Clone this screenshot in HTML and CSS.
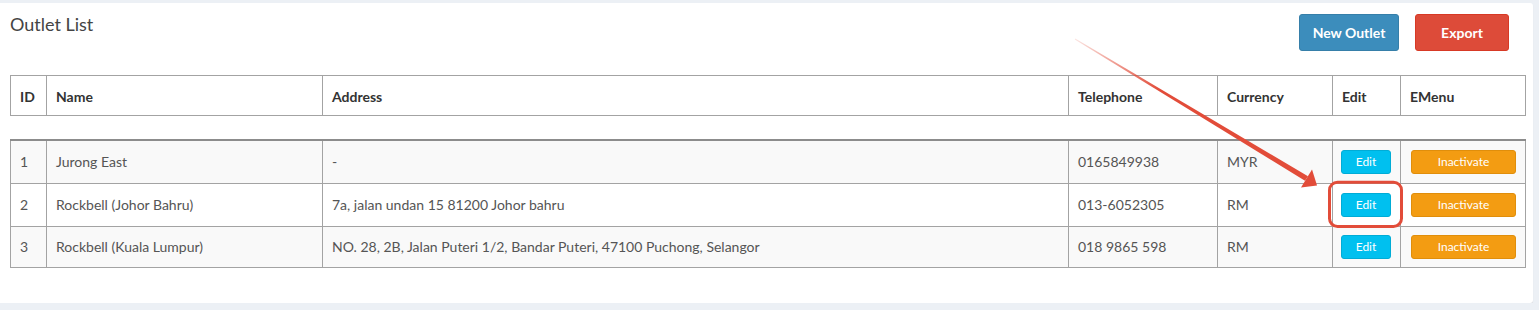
FILE: index.html
```html
<!doctype html>
<html lang="en">
  <head>
    <meta charset="UTF-8" />
    <meta name="viewport" content="width=device-width, initial-scale=1.0" />
    <title>Outlet List</title>
    <link rel="stylesheet" href="styles.css">
  </head>
  <body>
    <div class="box">
      <div class="box-header">
        <h3 class="box-title">Outlet List</h3>
        <div class="box-tools">
          <a href="#" class="btn btn-primary">New Outlet</a>
          <a href="#" class="btn btn-danger">Export</a>
        </div>
      </div>

      <table class="grid grid-head">
        <colgroup>
          <col class="c-id"><col class="c-name"><col class="c-address"><col class="c-tel">
          <col class="c-cur"><col class="c-edit"><col class="c-menu">
        </colgroup>
        <thead>
          <tr>
            <th>ID</th>
            <th>Name</th>
            <th>Address</th>
            <th>Telephone</th>
            <th>Currency</th>
            <th>Edit</th>
            <th>EMenu</th>
          </tr>
        </thead>
      </table>

      <table class="grid grid-body">
        <colgroup>
          <col class="c-id"><col class="c-name"><col class="c-address"><col class="c-tel">
          <col class="c-cur"><col class="c-edit"><col class="c-menu">
        </colgroup>
        <tbody>
          <tr>
            <td>1</td>
            <td>Jurong East</td>
            <td>-</td>
            <td>0165849938</td>
            <td>MYR</td>
            <td class="action"><a href="#" class="btn-xs btn-info">Edit</a></td>
            <td class="action"><a href="#" class="btn-xs btn-warning">Inactivate</a></td>
          </tr>
          <tr>
            <td>2</td>
            <td>Rockbell (Johor Bahru)</td>
            <td>7a, jalan undan 15 81200 Johor bahru</td>
            <td>013-6052305</td>
            <td>RM</td>
            <td class="action"><a href="#" class="btn-xs btn-info">Edit</a></td>
            <td class="action"><a href="#" class="btn-xs btn-warning">Inactivate</a></td>
          </tr>
          <tr class="last">
            <td>3</td>
            <td>Rockbell (Kuala Lumpur)</td>
            <td>NO. 28, 2B, Jalan Puteri 1/2, Bandar Puteri, 47100 Puchong, Selangor</td>
            <td>018 9865 598</td>
            <td>RM</td>
            <td class="action"><a href="#" class="btn-xs btn-info">Edit</a></td>
            <td class="action"><a href="#" class="btn-xs btn-warning">Inactivate</a></td>
          </tr>
        </tbody>
      </table>
    </div>

    <!-- annotation drawn over the screenshot -->
    <svg class="annotation" width="1539" height="310" viewBox="0 0 1539 310">
      <defs>
        <linearGradient id="fade" gradientUnits="userSpaceOnUse" x1="1075" y1="39" x2="1160" y2="90">
          <stop offset="0" stop-color="#e24c39" stop-opacity="0.15" />
          <stop offset="1" stop-color="#e24c39" stop-opacity="1" />
        </linearGradient>
      </defs>
      <polygon fill="url(#fade)" points="1074.8,39.4 1075.2,38.6 1308,176.2 1305,180.8" />
      <polygon fill="#e24c39" points="1317,185.5 1312,169.5 1301,187.5" />
      <rect x="1329.5" y="182.2" width="72" height="44.3" rx="8" ry="8"
            fill="none" stroke="#e24c39" stroke-width="3" />
    </svg>
  </body>
</html>
```

FILE: styles.css
```css
* {
  margin: 0;
  padding: 0;
  box-sizing: border-box;
}

body {
  font-family: Lato, 'Open Sans', sans-serif;
  background: #ecf0f5;
  color: #333;
  padding: 3px 6px 0 0;
  position: relative;
  overflow: hidden;
}

/* Box */
.box {
  background: #fff;
  height: 300px;
  border-radius: 0 3px 3px 0;
  box-shadow: 0 1px 1px rgba(0, 0, 0, 0.1);
  padding: 10px 8px 0 10px;
}

.box-header {
  display: flex;
  justify-content: space-between;
  align-items: flex-start;
  height: 62px;
}

.box-title {
  font-size: 18px;
  font-weight: 400;
  color: #444;
  line-height: 22px;
}

.box-tools {
  display: flex;
  gap: 16px;
  margin: 1px 16px 0 0;
}

.btn {
  display: flex;
  align-items: center;
  justify-content: center;
  height: 37px;
  border-radius: 3px;
  color: #fff;
  font-size: 14px;
  font-weight: 700;
  text-decoration: none;
}

.btn-primary {
  width: 100px;
  background: #3c8dbc;
  border: 1px solid #367fa9;
}

.btn-danger {
  width: 94px;
  background: #dd4b39;
  border: 1px solid #d73925;
}

/* Tables */
.grid {
  width: 1515px;
  table-layout: fixed;
  border-collapse: collapse;
  font-size: 14px;
}

.c-id { width: 36px; }
.c-name { width: 276px; }
.c-address { width: 746px; }
.c-tel { width: 149px; }
.c-cur { width: 115px; }
.c-edit { width: 68px; }
.c-menu { width: 125px; }

.grid th,
.grid td {
  border: 1px solid #a3a3a3;
  text-align: left;
  padding: 0 9px;
  white-space: nowrap;
}

.grid th {
  height: 40px;
  font-weight: 700;
  color: #333;
  padding-top: 2px;
}

.grid-body {
  margin-top: 23px;
  border-top: 2px solid #8c8c8c;
}

.grid-body tr:first-child td {
  border-top: 2px solid #8c8c8c;
}

.grid td {
  height: 43px;
  color: #555;
}

.grid tr.last td {
  height: 41px;
}

.grid tbody tr:nth-child(odd) {
  background: #f9f9f9;
}

.grid td.action {
  padding: 0 9px 0 8px;
}

.grid td.action:last-child {
  padding: 0 9px 0 10px;
}

.btn-xs {
  display: flex;
  align-items: center;
  justify-content: center;
  height: 24px;
  border-radius: 3px;
  color: #fff;
  font-size: 12px;
  text-decoration: none;
}

.btn-info {
  background: #00c0ef;
  border: 1px solid #00acd6;
}

.btn-warning {
  background: #f39c12;
  border: 1px solid #e08e0b;
}

.annotation {
  position: absolute;
  top: 0;
  left: 0;
  pointer-events: none;
}
```
